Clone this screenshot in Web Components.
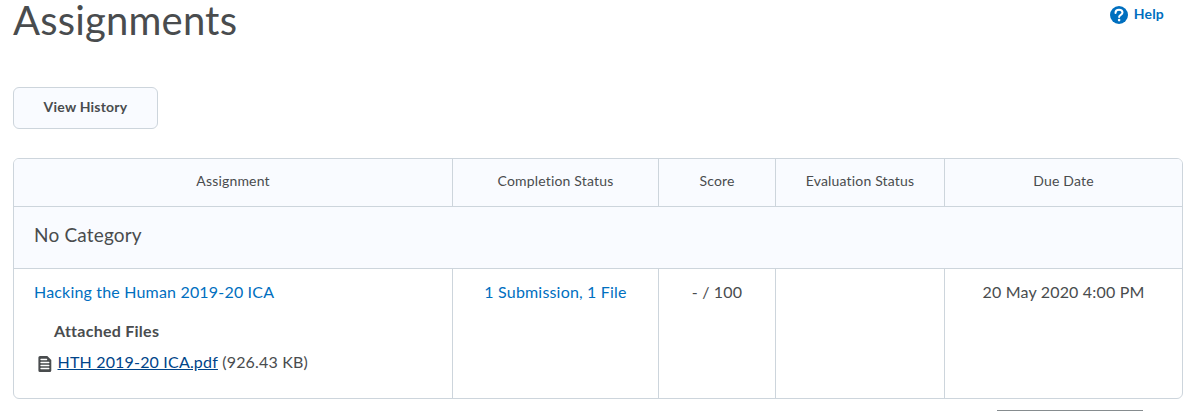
<!DOCTYPE html>
<html lang="en">
<head>
<meta charset="utf-8">
<title>Assignments</title>
<style>
:root {
  --tx: #494c4e;
  --link: #006fbf;
  --link-dk: #004489;
  --bd: #cdd5dc;
  --sf: #f9fbff;
}
html, body {
  margin: 0;
  height: 411px;
  overflow: hidden;
  background: #fff;
}
body {
  font-family: Lato, "Liberation Sans", sans-serif;
  font-size: 16px;
  line-height: 20px;
  letter-spacing: 0.18px;
  color: var(--tx);
}
</style>
</head>
<body>
<assignments-page></assignments-page>

<script>
/** page-header — title slot on the left, help link on the right. */
class PageHeader extends HTMLElement {
  constructor() {
    super();
    this.attachShadow({ mode: "open" }).innerHTML = `
<style>
:host {
  display: flex;
  justify-content: space-between;
  align-items: flex-start;
  height: 87px;
}
h1 {
  margin: 0;
  font-size: 40px;
  font-weight: 400;
  line-height: 40px;
}
</style>
<h1><slot></slot></h1>
<slot name="action"></slot>`;
  }
}
customElements.define("page-header", PageHeader);

class HelpLink extends HTMLElement {
  constructor() {
    super();
    this.attachShadow({ mode: "open" }).innerHTML = `
<style>
:host {
  display: flex;
  gap: 6px;
  padding: 4px 19px 0 0;
  color: var(--link);
  font-size: 14px;
  font-weight: 700;
}
svg { display: block; margin-top: 2px; }
</style>
<svg width="18" height="18" viewBox="0 0 18 18">
  <circle cx="9" cy="9" r="9" fill="#006fbf"/>
  <path d="M5.5 6.9C5.5 4.7 7 3.7 9 3.7s3.5 1.1 3.5 2.9c0 2.3-3.4 2.2-3.4 4.4" fill="none" stroke="#fff" stroke-width="2" stroke-linecap="round"/>
  <circle cx="9.1" cy="14.1" r="1.3" fill="#fff"/>
</svg>
<span><slot></slot></span>`;
  }
}
customElements.define("help-link", HelpLink);

class PlainButton extends HTMLElement {
  constructor() {
    super();
    this.attachShadow({ mode: "open" }).innerHTML = `
<style>
:host { display: block; }
button {
  display: block;
  box-sizing: border-box;
  width: 145px;
  height: 42px;
  padding: 0 0 2px;
  border: 1px solid var(--bd);
  border-radius: 6px;
  background: var(--sf);
  color: var(--tx);
  font: 700 14px/20px Lato, "Liberation Sans", sans-serif;
  letter-spacing: 0.22px;
}
</style>
<button type="button"><slot></slot></button>`;
  }
}
customElements.define("plain-button", PlainButton);

/** file-item — document icon, linked name and size. */
class FileItem extends HTMLElement {
  constructor() {
    super();
    this.attachShadow({ mode: "open" }).innerHTML = `
<style>
:host { display: flex; white-space: pre; }
svg { display: block; margin: 4px 6px 0 0; }
.name {
  color: var(--link-dk);
  text-decoration: underline;
}
</style>
<svg width="13.5" height="16" viewBox="0 0 13.5 16">
  <path d="M2 0h7.3L13.3 4V14.4a1.6 1.6 0 0 1-1.6 1.6H2A1.6 1.6 0 0 1 .4 14.4V1.6A1.6 1.6 0 0 1 2 0z" fill="#494c4e"/>
  <path d="M3 3.5h5.6M3 6.5h7.8M3 9.5h7.8M3 12.5h7.8" stroke="#fff" stroke-width="1.3" stroke-linecap="round"/>
</svg>
<span class="name"><slot></slot></span><span> <slot name="size"></slot></span>`;
  }
}
customElements.define("file-item", FileItem);

/** grid-cell — one table cell; attributes: head, group, left, link, last. */
class GridCell extends HTMLElement {
  constructor() {
    super();
    this.attachShadow({ mode: "open" }).innerHTML = `
<style>
:host {
  display: block;
  box-sizing: border-box;
  padding: 13px 20px 0;
  border-right: 1px solid var(--bd);
  text-align: center;
  white-space: nowrap;
}
:host([left]) { text-align: left; }
:host([link]) { color: var(--link); }
:host([last]) { border-right: none; }
:host([head]) {
  padding: 12px 0 0;
  border-bottom: 1px solid var(--bd);
  background: var(--sf);
  font-size: 14px;
}
:host([group]) {
  grid-column: 1 / -1;
  padding-top: 18px;
  border-right: none;
  border-bottom: 1px solid var(--bd);
  background: var(--sf);
  font-size: 19px;
  text-align: left;
}
</style>
<slot></slot>`;
  }
}
customElements.define("grid-cell", GridCell);

class AssignmentsGrid extends HTMLElement {
  constructor() {
    super();
    this.attachShadow({ mode: "open" }).innerHTML = `
<style>
:host {
  display: grid;
  box-sizing: border-box;
  width: 1170px;
  grid-template-columns: 439px 206px 117px 169px 1fr;
  grid-template-rows: 48px 62px 129px;
  margin-top: 29px;
  border: 1px solid var(--bd);
  border-radius: 6px;
  overflow: hidden;
}
.title { color: var(--link); }
.files-h {
  margin: 19px 0 11px 20px;
  font-weight: 700;
  letter-spacing: 0.26px;
}
file-item { margin-left: 4px; }
</style>
<grid-cell head>Assignment</grid-cell>
<grid-cell head>Completion Status</grid-cell>
<grid-cell head>Score</grid-cell>
<grid-cell head>Evaluation Status</grid-cell>
<grid-cell head last>Due Date</grid-cell>
<grid-cell group>No Category</grid-cell>
<grid-cell left>
  <div class="title">Hacking the Human 2019-20 ICA</div>
  <div class="files-h">Attached Files</div>
  <file-item>HTH 2019-20 ICA.pdf<span slot="size">(926.43 KB)</span></file-item>
</grid-cell>
<grid-cell link>1 Submission, 1 File</grid-cell>
<grid-cell>- / 100</grid-cell>
<grid-cell></grid-cell>
<grid-cell last>20 May 2020 4:00 PM</grid-cell>`;
  }
}
customElements.define("assignments-grid", AssignmentsGrid);

class AssignmentsPage extends HTMLElement {
  constructor() {
    super();
    this.attachShadow({ mode: "open" }).innerHTML = `
<style>
:host {
  display: block;
  padding: 0 11px 0 13px;
}
/* top edge of the page size picker */
.pager {
  width: 146px;
  height: 1px;
  margin: 11px 40px 0 auto;
  background: #868c8f;
}
</style>
<page-header>Assignments<help-link slot="action">Help</help-link></page-header>
<plain-button>View History</plain-button>
<assignments-grid></assignments-grid>
<div class="pager"></div>`;
  }
}
customElements.define("assignments-page", AssignmentsPage);
</script>
</body>
</html>
